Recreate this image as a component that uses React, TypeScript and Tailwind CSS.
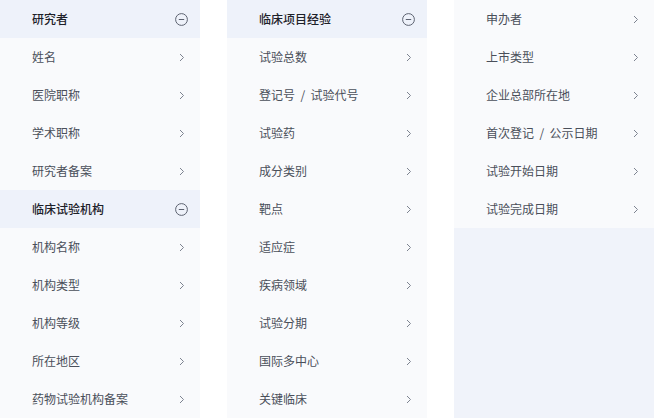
type Row = { label: string; head?: boolean };

const col1: Row[] = [
  { label: "研究者", head: true },
  { label: "姓名" },
  { label: "医院职称" },
  { label: "学术职称" },
  { label: "研究者备案" },
  { label: "临床试验机构", head: true },
  { label: "机构名称" },
  { label: "机构类型" },
  { label: "机构等级" },
  { label: "所在地区" },
  { label: "药物试验机构备案" },
];

const col2: Row[] = [
  { label: "临床项目经验", head: true },
  { label: "试验总数" },
  { label: "登记号\u00a0\u00a0/\u00a0\u00a0试验代号" },
  { label: "试验药" },
  { label: "成分类别" },
  { label: "靶点" },
  { label: "适应症" },
  { label: "疾病领域" },
  { label: "试验分期" },
  { label: "国际多中心" },
  { label: "关键临床" },
];

const col3: Row[] = [
  { label: "申办者" },
  { label: "上市类型" },
  { label: "企业总部所在地" },
  { label: "首次登记\u00a0\u00a0/\u00a0\u00a0公示日期" },
  { label: "试验开始日期" },
  { label: "试验完成日期" },
];

function MinusCircle() {
  return (
    <svg width="13" height="13" viewBox="0 0 13 13" fill="none" className="text-[#5c6270]">
      <circle cx="6.5" cy="6.5" r="5.9" stroke="currentColor" strokeWidth="1" />
      <path d="M3.8 6.5h5.4" stroke="currentColor" strokeWidth="1" />
    </svg>
  );
}

function Chevron() {
  return (
    <svg width="13" height="13" viewBox="0 0 13 13" fill="none" className="text-[#7d8390]">
      <path d="M5 3l3.5 3.5L5 10" stroke="currentColor" strokeWidth="1" />
    </svg>
  );
}

function Item({ row }: { row: Row }) {
  return (
    <div
      className={`flex h-[38px] items-center justify-between pl-8 pr-[12px] text-[12px] ${
        row.head ? "bg-[#eef2fa] font-medium text-[#1d2129]" : "bg-[#f9fafc] text-[#4a4f5a]"
      }`}
    >
      <span className="whitespace-pre">{row.label}</span>
      {row.head ? <MinusCircle /> : <Chevron />}
    </div>
  );
}

export default function App() {
  return (
    <div
      className="flex h-[418px] w-[654px] gap-[27px] overflow-hidden bg-white"
      style={{ fontFamily: '"Noto Sans CJK SC", "Noto Sans", sans-serif' }}
    >
      <div className="flex w-[200px] flex-col">
        {col1.map((r) => (
          <Item key={r.label} row={r} />
        ))}
      </div>
      <div className="flex w-[200px] flex-col">
        {col2.map((r) => (
          <Item key={r.label} row={r} />
        ))}
      </div>
      <div className="flex w-[200px] flex-col">
        {col3.map((r) => (
          <Item key={r.label} row={r} />
        ))}
        <div className="flex-1 bg-[#f0f3fa]" />
      </div>
    </div>
  );
}
